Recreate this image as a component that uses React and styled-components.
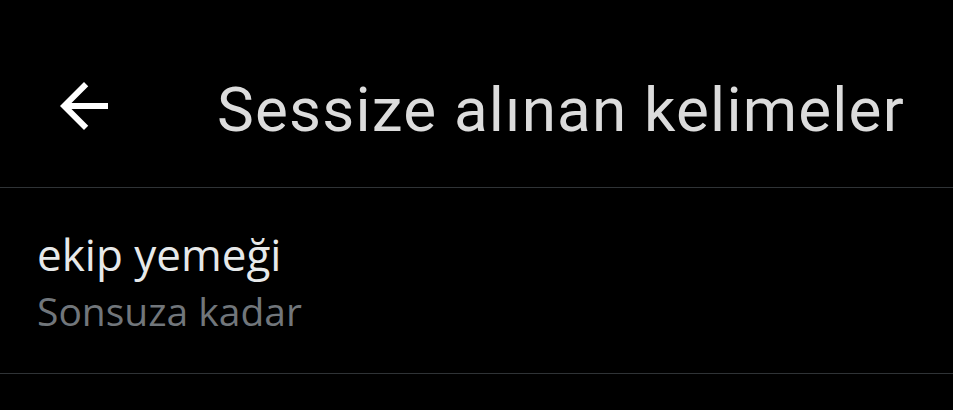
import React from "react";
import styled, { createGlobalStyle } from "styled-components";

const GlobalStyle = createGlobalStyle`
    html, body {
        margin: 0;
        padding: 0;
        background: #000;
    }
`;

const Page = styled.div`
    width: 953px;
    height: 410px;
    background: #000;
    overflow: hidden;
`;

const TopBar = styled.div`
    display: flex;
    align-items: flex-start;
    height: 188px;
    border-bottom: 1px solid #2f3336;
    box-sizing: border-box;
    padding-left: 48px;
`;

const BackButton = styled.button`
    display: flex;
    align-items: center;
    justify-content: center;
    width: 72px;
    height: 72px;
    padding: 0;
    margin-top: 70px;
    border: none;
    background: transparent;
    color: #fff;
    cursor: pointer;
`;

const Title = styled.h1`
    margin: 79px 0 0 97px;
    font-family: Roboto, "Liberation Sans", sans-serif;
    font-weight: 400;
    font-size: 62px;
    letter-spacing: 1.2px;
    color: #dcdcdc;
    line-height: 1;
    white-space: nowrap;
`;

const WordRow = styled.div`
    display: flex;
    flex-direction: column;
    height: 186px;
    padding: 40px 0 0 37px;
    box-sizing: border-box;
    border-bottom: 1px solid #2f3336;
`;

const Word = styled.span`
    font-family: "Open Sans", "Liberation Sans", sans-serif;
    font-size: 44px;
    color: #e7e9ea;
    line-height: 52px;
`;

const Duration = styled.span`
    margin-top: 7px;
    font-family: "Open Sans", "Liberation Sans", sans-serif;
    font-size: 39px;
    color: #71767b;
    line-height: 48px;
`;

const ArrowBack = () => (
    <svg width="72" height="72" viewBox="0 0 24 24" fill="currentColor">
        <path d="M20 11H7.83l5.59-5.59L12 4l-8 8 8 8 1.41-1.41L7.83 13H20v-2z" />
    </svg>
);

const App = () => {
    return (
        <Page>
            <GlobalStyle />
            <TopBar>
                <BackButton aria-label="Geri">
                    <ArrowBack />
                </BackButton>
                <Title>Sessize alınan kelimeler</Title>
            </TopBar>
            <WordRow>
                <Word>ekip yemeği</Word>
                <Duration>Sonsuza kadar</Duration>
            </WordRow>
        </Page>
    );
};

export default App;
